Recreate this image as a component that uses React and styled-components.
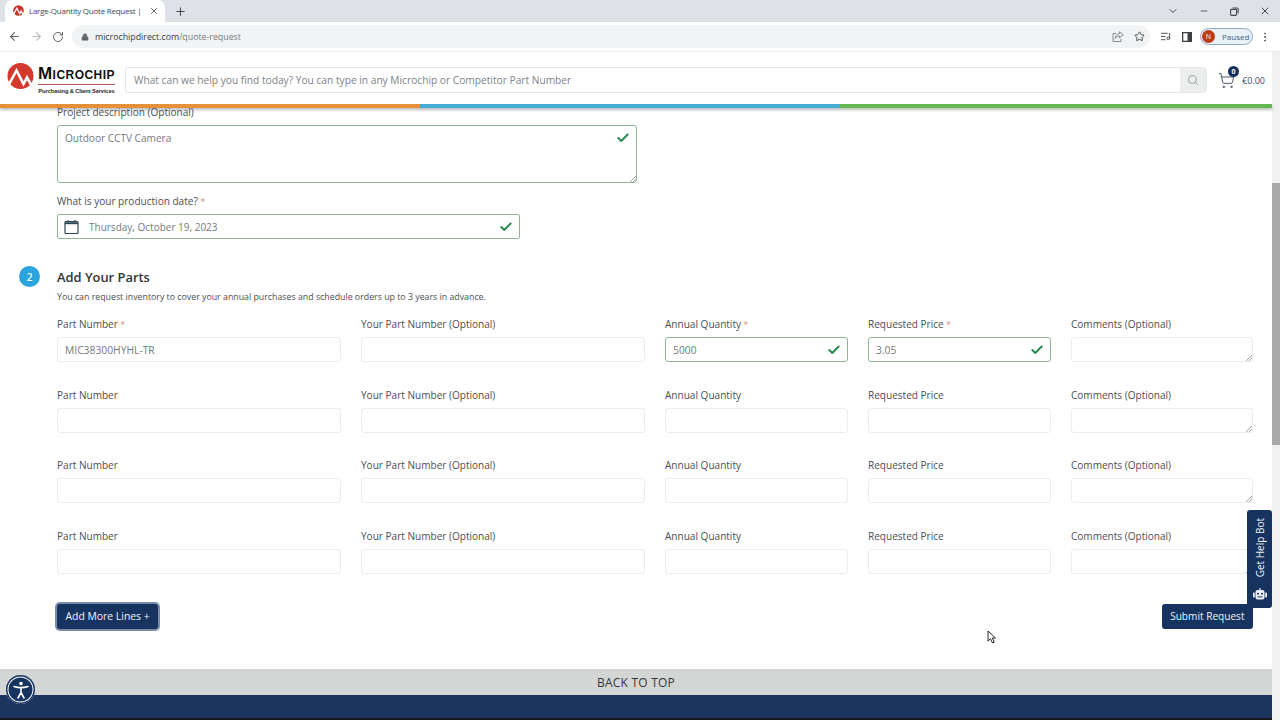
import styled, { createGlobalStyle } from "styled-components"
import {
  ArrowLeft,
  ArrowRight,
  RotateCw,
  Lock,
  Plus,
  X,
  ChevronDown,
  Minus,
  Star,
  ListMusic,
  MoreVertical,
  Search,
  ShoppingCart,
  Check,
} from "lucide-react"

const GlobalStyle = createGlobalStyle`
  html, body {
    margin: 0;
    padding: 0;
    background: #fff;
    overflow: hidden;
  }
  body {
    font-family: "Open Sans", "Liberation Sans", sans-serif;
    color: #4a4f54;
  }
`

const Page = styled.div`
  position: relative;
  width: 1280px;
  height: 720px;
  display: flex;
  flex-direction: column;
  overflow: hidden;
`

const TabStrip = styled.div`
  height: 22px;
  flex: none;
  display: flex;
  align-items: flex-end;
  padding-left: 5px;
  background: #dee1e6;
`

const Tab = styled.div`
  width: 160px;
  height: 22px;
  box-sizing: border-box;
  display: flex;
  align-items: center;
  gap: 5px;
  padding: 0 6px 1px 8px;
  background: #fff;
  border-radius: 7px 7px 0 0;
  font-size: 8px;
  letter-spacing: -0.25px;
  color: #45494e;
  white-space: nowrap;
`

const TabTitle = styled.span`
  flex: 1;
`

const NewTab = styled.div`
  display: flex;
  margin: 0 auto 4px 9px;
  color: #45494e;
`

const WindowButtons = styled.div`
  display: flex;
  align-items: center;
  gap: 20.5px;
  height: 22px;
  padding-right: 9px;
  color: #45494e;
`

const Toolbar = styled.div`
  height: 30px;
  flex: none;
  display: flex;
  align-items: center;
  padding: 0 9px 0 8px;
  gap: 9px;
  background: #fff;
  color: #5f6368;
  border-bottom: 1px solid #e8eaed;
  box-sizing: border-box;
`

const NavIcon = styled.span`
  display: flex;
  width: 13px;
  color: ${(p) => (p.$dim ? "#b8bbbf" : "#5f6368")};
`

const Omnibox = styled.div`
  width: 1078px;
  height: 23px;
  margin: 0 1px 0 -2px;
  box-sizing: border-box;
  display: flex;
  align-items: center;
  gap: 6px;
  padding: 0 5px 0 9px;
  border-radius: 12px;
  background: #f1f3f4;
  font-size: 8.8px;
  color: #7a7e83;
`

const Host = styled.span`
  color: #3c4043;
`

const OmniActions = styled.div`
  margin-left: auto;
  display: flex;
  gap: 10px;
  color: #6a6e73;
`

const ToolIcons = styled.div`
  display: flex;
  align-items: center;
  gap: 11px;
  margin-right: -1px;
  color: #45494e;
`

const Profile = styled.div`
  width: 53px;
  height: 17px;
  box-sizing: border-box;
  display: flex;
  align-items: center;
  gap: 7px;
  padding-left: 1px;
  margin-right: -3px;
  border: 1px solid #8fa9bd;
  border-radius: 9px;
  background: #e8f0f8;
  font-size: 8px;
  color: #41617f;
`

const Avatar = styled.span`
  width: 13px;
  height: 13px;
  border-radius: 50%;
  display: flex;
  align-items: center;
  justify-content: center;
  background: #bd3a12;
  color: #fff;
  font-size: 7px;
`

const Viewport = styled.div`
  flex: 1;
  min-height: 0;
  display: flex;
`

const Main = styled.div`
  flex: 1;
  min-width: 0;
  display: flex;
  flex-direction: column;
`

const SiteHeader = styled.header`
  height: 52px;
  flex: none;
  display: flex;
  align-items: center;
  padding: 4px 7px 0 7px;
  background: #fff;
  box-sizing: border-box;
`

const Logo = styled.div`
  width: 110px;
  height: 36px;
  flex: none;
  display: flex;
  align-items: flex-start;
  gap: 4px;
`

const LogoGraphic = styled.svg`
  flex: none;
  margin-top: 1px;
`

const LogoText = styled.div`
  margin-top: 3px;
  display: flex;
  flex-direction: column;
  align-items: center;
`

const LogoName = styled.span`
  font-family: "Liberation Sans", sans-serif;
  font-weight: 700;
  font-size: 17px;
  line-height: 17px;
  padding-bottom: 2px;
  color: #111;
  letter-spacing: 0.45px;
  font-variant: small-caps;
  border-bottom: 1px solid #a8564e;
`

const LogoSub = styled.span`
  font-family: "Liberation Sans", sans-serif;
  font-weight: 700;
  font-size: 5.7px;
  line-height: 13px;
  color: #25282b;
  white-space: nowrap;
  letter-spacing: -0.1px;
`

const SearchBox = styled.div`
  width: 1084px;
  height: 26px;
  margin-left: 8px;
  box-sizing: border-box;
  display: flex;
  align-items: center;
  justify-content: space-between;
  border: 1px solid #e6e8e9;
  border-radius: 3px;
  padding-left: 8px;
  font-size: 10.2px;
  color: #7d8286;
`

const SearchButton = styled.span`
  width: 26px;
  height: 24px;
  display: flex;
  align-items: center;
  justify-content: center;
  background: #eceeee;
  color: #9a9ea2;
`

const Cart = styled.div`
  position: relative;
  display: flex;
  align-items: center;
  gap: 7px;
  margin-left: 11px;
  font-size: 9px;
  color: #3f4a57;
`

const CartBadge = styled.span`
  position: absolute;
  top: -6px;
  left: 10px;
  width: 11px;
  height: 11px;
  border-radius: 50%;
  display: flex;
  align-items: center;
  justify-content: center;
  background: #14305a;
  color: #fff;
  font-size: 7px;
  font-weight: 700;
`

const ColourBar = styled.div`
  height: 4px;
  flex: none;
  display: flex;
  position: relative;
  z-index: 2;
  box-shadow: 0 2px 3px rgba(60, 60, 60, 0.35);
`

const ColourStripe = styled.span`
  flex: ${(p) => (p.$fill ? "1" : "0 0 420px")};
  background: ${(p) => p.$color};
`

const Form = styled.main`
  height: 564px;
  flex: none;
  margin-top: -3px;
  box-sizing: border-box;
  padding: 0 19px 0 57px;
`

const Label = styled.label`
  display: block;
  height: 14px;
  line-height: 14px;
  font-size: 10.05px;
  color: #4a4f54;
  white-space: nowrap;
`

const Required = styled.span`
  color: #dd8f89;
  font-size: 9px;
`

const TextArea = styled.div`
  position: relative;
  width: 580px;
  height: 58px;
  box-sizing: border-box;
  margin-top: 6px;
  padding: 5px 7px;
  border: 1px solid #8db597;
  border-radius: 3px;
  line-height: 14px;
  color: #757a7e;
  font-size: 10.1px;
`

const Resize = styled.svg`
  position: absolute;
  right: 0;
  bottom: 0;
`

const ValidMark = styled.span`
  position: absolute;
  right: 6px;
  top: 5px;
  display: flex;
  color: #2e8b4f;
`

const DateGroup = styled.div`
  margin-top: 11px;
`

const DateInput = styled.div`
  position: relative;
  width: 463px;
  height: 25px;
  box-sizing: border-box;
  margin-top: 6px;
  display: flex;
  align-items: center;
  gap: 10px;
  padding-left: 6px;
  border: 1px solid #8db597;
  border-radius: 2px;
  color: #757a7e;
  font-size: 10px;
`

const CalendarGraphic = styled.svg`
  flex: none;
  color: #2f4858;
`

const Section = styled.section`
  position: relative;
  margin-top: 30px;
`

const StepBadge = styled.span`
  position: absolute;
  left: -38px;
  top: -3px;
  width: 21px;
  height: 21px;
  border-radius: 50%;
  display: flex;
  align-items: center;
  justify-content: center;
  background: #2ba3dc;
  color: #fff;
  font-size: 10px;
  font-weight: 600;
`

const Heading = styled.h2`
  margin: 0;
  height: 16px;
  line-height: 16px;
  font-size: 12.9px;
  font-weight: 600;
  color: #2f3438;
`

const Intro = styled.p`
  margin: 5px 0 0;
  height: 14px;
  line-height: 14px;
  font-size: 8.8px;
  color: #4a4f54;
`

const PartRows = styled.div`
  margin-top: 13px;
  display: flex;
  flex-direction: column;
  gap: 25.5px;
`

const PartRow = styled.div`
  display: grid;
  grid-template-columns: 284px 284px 183px 183px 182px;
  column-gap: 20px;
`

const Field = styled.div`
  display: flex;
  flex-direction: column;
  gap: 6px;
`

const Input = styled.div`
  position: relative;
  height: 25px;
  box-sizing: border-box;
  display: flex;
  align-items: center;
  padding-left: 7px;
  border: 1px solid ${(p) => (p.$valid ? "#8db597" : "#ececec")};
  border-radius: 3px;
  color: #757a7e;
  font-size: 10.3px;
  background: #fff;
`

const Actions = styled.div`
  margin-top: 30px;
  display: flex;
  justify-content: space-between;
`

const Button = styled.button`
  height: 25px;
  padding: 0 8.5px;
  border: none;
  border-radius: 3px;
  background: #17335f;
  color: #eef2f6;
  font-family: inherit;
  font-size: ${(p) => (p.$focus ? "10.4px" : "10.1px")};
  box-shadow: ${(p) => (p.$focus ? "0 0 0 2px #7a8da8" : "none")};
`

const BackToTop = styled.div`
  height: 26px;
  flex: none;
  display: flex;
  align-items: center;
  justify-content: center;
  padding-top: 1px;
  box-sizing: border-box;
  background: #d3d6d5;
  color: #33383c;
  font-size: 12px;
  letter-spacing: 0.22px;
`

const FooterBand = styled.div`
  height: 23px;
  flex: none;
  background: #1b355f;
`

const BlackEdge = styled.div`
  flex: 1;
  background: #16181c;
`

const Scrollbar = styled.div`
  width: 8px;
  flex: none;
  background: #f1f1f1;
  display: flex;
  flex-direction: column;
  padding-top: 131px;
  box-sizing: border-box;
`

const ScrollThumb = styled.span`
  height: 262px;
  background: #a8a8a8;
`

const BotTab = styled.div`
  position: absolute;
  left: 1247px;
  top: 510px;
  width: 25px;
  height: 98px;
  box-sizing: border-box;
  display: flex;
  flex-direction: column;
  align-items: center;
  justify-content: space-between;
  padding: 8px 0 8px;
  border-radius: 3px;
  background: #17335f;
  color: #eef2f6;
  font-size: 10px;
`

const BotLabel = styled.span`
  writing-mode: vertical-rl;
  transform: rotate(180deg);
  white-space: nowrap;
`

const AccessButton = styled.div`
  position: absolute;
  left: 6px;
  top: 675px;
  width: 29px;
  height: 29px;
  border-radius: 50%;
  background: #17335f;
  box-shadow: inset 0 0 0 1.5px #17335f, inset 0 0 0 2.5px #fff;
  display: flex;
  align-items: center;
  justify-content: center;
`

const Pointer = styled.svg`
  position: absolute;
  left: 987px;
  top: 630px;
`

const LogoMark = () => (
  <LogoGraphic width="27" height="26" viewBox="0 0 27 26">
    <circle cx="13.500" cy="13" r="13" fill="#d3392c" />
    <path d="M0 25L9.500 7.500L16.500 21L20 14.500L26 25" stroke="#fff" strokeWidth="2.600" fill="none" />
  </LogoGraphic>
)

const FavIcon = () => (
  <svg width="11" height="11" viewBox="0 0 27 26">
    <circle cx="13.500" cy="13" r="13" fill="#c9362b" />
    <path d="M0 25L9.500 7.500L16.500 21L20 14.500L26 25" stroke="#fff" strokeWidth="3" fill="none" />
  </svg>
)

const RestoreIcon = () => (
  <svg width="9" height="9" viewBox="0 0 9 9" fill="none" stroke="#45494e" strokeWidth="1.100">
    <rect x="0.600" y="2.400" width="6" height="6" rx="0.800" />
    <path d="M2.600 1h4.500a1 1 0 0 1 1 1v4.500" />
  </svg>
)

const ShareIcon = () => (
  <svg width="12" height="11" viewBox="0 0 12 11" fill="none" stroke="#7d8185" strokeWidth="0.900">
    <path d="M4 2.500H1v8h8V8" />
    <path d="M7.500 0.800L11.300 3.800L7.500 6.800V5C5.500 5 4 5.800 3.200 7.500C3.400 4.800 5 2.800 7.500 2.700z" />
  </svg>
)

const SidePanelIcon = () => (
  <svg width="10" height="10" viewBox="0 0 10 10">
    <path d="M0 0h10v10H0z M1.300 1.300v7.400H5.500V1.300z" fill="#3c4043" fillRule="evenodd" />
  </svg>
)

const CalendarIcon = () => (
  <CalendarGraphic width="15" height="14" viewBox="0 0 15 14" fill="none" stroke="currentColor" strokeWidth="1.200">
    <rect x="1" y="1.500" width="13" height="12" rx="1" />
    <path d="M1 3.200h13" strokeWidth="2" />
    <path d="M4 0v2M11 0v2" />
  </CalendarGraphic>
)

const BotIcon = () => (
  <svg width="14" height="12" viewBox="0 0 14 12" fill="#eef2f6">
    <rect x="6.400" y="0" width="1.200" height="2.500" />
    <rect x="2.500" y="2" width="9" height="9.500" rx="2" />
    <rect x="0" y="4.500" width="1.800" height="5" rx="0.800" />
    <rect x="12.200" y="4.500" width="1.800" height="5" rx="0.800" />
    <circle cx="5" cy="5.800" r="1" fill="#17335f" />
    <circle cx="9" cy="5.800" r="1" fill="#17335f" />
    <rect x="4.500" y="8.400" width="5" height="1" fill="#17335f" />
  </svg>
)

const CheckMark = () => (
  <ValidMark>
    <Check size={14} strokeWidth={3.500} />
  </ValidMark>
)

const ResizeGrip = () => (
  <Resize width="7" height="7" viewBox="0 0 7 7">
    <path d="M1 7l6-6M4 7l3-3" stroke="#8b8f92" strokeWidth="0.800" />
  </Resize>
)

const emptyRow = [
  { label: "Part Number" },
  { label: "Your Part Number (Optional)" },
  { label: "Annual Quantity" },
  { label: "Requested Price" },
  { label: "Comments (Optional)", grip: true },
]

const rows = [
  [
    { label: "Part Number", required: true, value: "MIC38300HYHL-TR" },
    { label: "Your Part Number (Optional)" },
    { label: "Annual Quantity", required: true, value: "5000", valid: true },
    { label: "Requested Price", required: true, value: "3.05", valid: true },
    { label: "Comments (Optional)", grip: true },
  ],
  emptyRow,
  emptyRow,
  emptyRow,
]

const App = () => {
  return (
    <>
      <GlobalStyle />
      <Page>
        <TabStrip>
          <Tab>
            <FavIcon />
            <TabTitle>Large-Quantity Quote Request |</TabTitle>
            <X size={10} strokeWidth={2} />
          </Tab>
          <NewTab>
            <Plus size={13} strokeWidth={2} />
          </NewTab>
          <WindowButtons>
            <ChevronDown size={12} />
            <Minus size={10} />
            <RestoreIcon />
            <X size={12} />
          </WindowButtons>
        </TabStrip>

        <Toolbar>
          <NavIcon><ArrowLeft size={13} /></NavIcon>
          <NavIcon $dim><ArrowRight size={13} /></NavIcon>
          <NavIcon><RotateCw size={12} /></NavIcon>
          <Omnibox>
            <Lock size={8} fill="#5f6368" />
            <span><Host>microchipdirect.com</Host>/quote-request</span>
            <OmniActions>
              <ShareIcon />
              <Star size={11} color="#45494e" />
            </OmniActions>
          </Omnibox>
          <ToolIcons>
            <ListMusic size={11} />
            <SidePanelIcon />
          </ToolIcons>
          <Profile>
            <Avatar>N</Avatar>
            Paused
          </Profile>
          <MoreVertical size={12} color="#45494e" />
        </Toolbar>

        <Viewport>
          <Main>
            <SiteHeader>
              <Logo>
                <LogoMark />
                <LogoText>
                  <LogoName>Microchip</LogoName>
                  <LogoSub>Purchasing &amp; Client Services</LogoSub>
                </LogoText>
              </Logo>
              <SearchBox>
                What can we help you find today? You can type in any Microchip or Competitor Part Number
                <SearchButton><Search size={12} /></SearchButton>
              </SearchBox>
              <Cart>
                <ShoppingCart size={17} strokeWidth={1.300} />
                <CartBadge>0</CartBadge>
                €0.00
              </Cart>
            </SiteHeader>

            <ColourBar>
              <ColourStripe $color="#e5913a" />
              <ColourStripe $color="#45acd8" />
              <ColourStripe $color="#62b94f" $fill />
            </ColourBar>

            <Form>
              <Label>Project description (Optional)</Label>
              <TextArea>
                Outdoor CCTV Camera
                <CheckMark />
                <ResizeGrip />
              </TextArea>

              <DateGroup>
                <Label>What is your production date? <Required>*</Required></Label>
                <DateInput>
                  <CalendarIcon />
                  Thursday, October 19, 2023
                  <CheckMark />
                </DateInput>
              </DateGroup>

              <Section>
                <StepBadge>2</StepBadge>
                <Heading>Add Your Parts</Heading>
                <Intro>You can request inventory to cover your annual purchases and schedule orders up to 3 years in advance.</Intro>
                <PartRows>
                  {rows.map((row, i) => (
                    <PartRow key={i}>
                      {row.map((field) => (
                        <Field key={field.label}>
                          <Label>
                            {field.label}
                            {field.required && <Required> *</Required>}
                          </Label>
                          <Input $valid={field.valid}>
                            {field.value}
                            {field.valid && <CheckMark />}
                            {field.grip && <ResizeGrip />}
                          </Input>
                        </Field>
                      ))}
                    </PartRow>
                  ))}
                </PartRows>
                <Actions>
                  <Button $focus>Add More Lines +</Button>
                  <Button>Submit Request</Button>
                </Actions>
              </Section>
            </Form>
            <BackToTop>BACK TO TOP</BackToTop>
            <FooterBand />
            <BlackEdge />
          </Main>
          <Scrollbar>
            <ScrollThumb />
          </Scrollbar>
        </Viewport>

        <BotTab>
          <BotLabel>Get Help Bot</BotLabel>
          <BotIcon />
        </BotTab>
        <AccessButton>
          <svg width="20" height="20" viewBox="0 0 20 20" fill="none" stroke="#fff" strokeWidth="1.600" strokeLinecap="round">
            <circle cx="10" cy="3.500" r="1.800" fill="#fff" stroke="none" />
            <path d="M3 6.500c4 1.300 10 1.300 14 0M10 8v4.500M10 12.500L7 18M10 12.500l3 5.500" />
          </svg>
        </AccessButton>
        <Pointer width="10" height="14" viewBox="0 0 10 14">
          <path d="M1 1v10l2.500-2.200L5.500 13l1.800-.8-2-4.200H8.500z" fill="#fff" stroke="#111" strokeWidth="0.900" />
        </Pointer>
      </Page>
    </>
  )
}

export default App
